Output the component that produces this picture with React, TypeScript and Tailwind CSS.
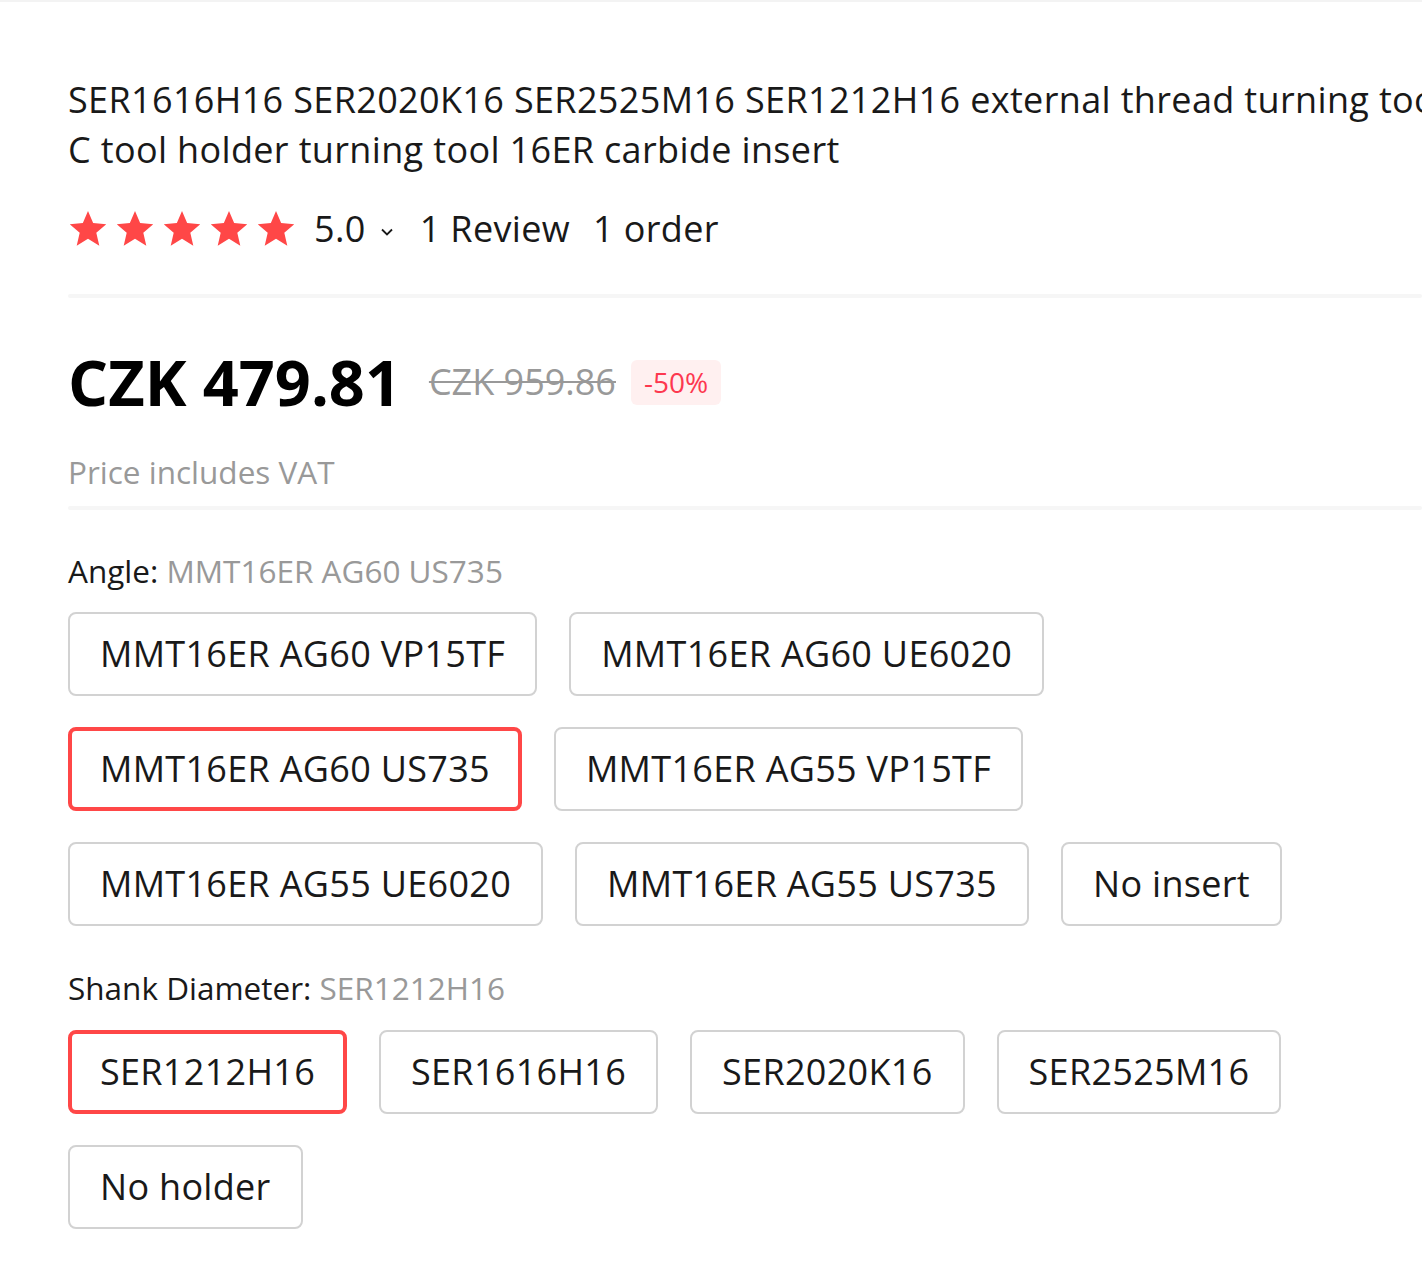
import React from 'react'

const angleOptions = [
  'MMT16ER AG60 VP15TF',
  'MMT16ER AG60 UE6020',
  'MMT16ER AG60 US735',
  'MMT16ER AG55 VP15TF',
  'MMT16ER AG55 UE6020',
  'MMT16ER AG55 US735',
  'No insert'
]

const shankOptions = ['SER1212H16', 'SER1616H16', 'SER2020K16', 'SER2525M16', 'No holder']

function Star() {
  return (
    <svg width="40" height="40" viewBox="0 0 24 24" className="shrink-0">
      <path
        d="M12 1.2l3.09 7.26 7.86.68-5.97 5.17 1.8 7.69L12 17.9 5.22 22l1.8-7.69L1.05 9.14l7.86-.68z"
        fill="#ff4747"
      />
    </svg>
  )
}

function OptionButton({ label, selected }: { label: string; selected: boolean }) {
  return (
    <button
      className={`h-[84px] flex items-center rounded-[8px] bg-white text-[36px] leading-[50px] tracking-[0.3px] text-[#191919] ${
        selected ? 'border-4 border-[#ff4747] px-[28px]' : 'border-2 border-[#d2d2d2] px-[30px]'
      }`}>
      {label}
    </button>
  )
}

export default function App() {
  const selectedAngle = 'MMT16ER AG60 US735'
  const selectedShank = 'SER1212H16'

  return (
    <div
      className="w-[1422px] h-[1272px] overflow-hidden bg-white border-t-2 border-[#f3f3f3]"
      style={{ fontFamily: '"Open Sans", "Noto Sans", sans-serif' }}>
      <div className="pl-[68px]">
        {/* Title */}
        <h1 className="mt-[73px] text-[36px] leading-[50px] tracking-[0.35px] font-normal text-[#191919]">
          <div className="whitespace-nowrap">
            SER1616H16 SER2020K16 SER2525M16 SER1212H16 external thread turning tool SE
          </div>
          <div className="whitespace-nowrap">C tool holder turning tool 16ER carbide insert</div>
        </h1>

        {/* Rating */}
        <div className="mt-[29px] flex items-center h-[50px] text-[36px] tracking-[0.35px] text-[#191919]">
          <div className="flex items-center gap-[7px]">
            {[0, 1, 2, 3, 4].map(i => (
              <Star key={i} />
            ))}
          </div>
          <span className="ml-[18px]">5.0</span>
          <svg width="18" height="12" viewBox="0 0 18 12" className="ml-[12px] mt-[6px]">
            <path d="M4 3.5l5 5 5-5" fill="none" stroke="#191919" strokeWidth="1.8" />
          </svg>
          <span className="ml-[24px]">1 Review</span>
          <span className="ml-[23px]">1 order</span>
        </div>

        <div className="mt-[40px] h-[4px] rounded-full bg-[#f6f6f6]" />

        {/* Price */}
        <div className="mt-[44px] flex items-center h-[80px]">
          <span className="text-[63px] font-bold text-black">CZK 479.81</span>
          <span className="ml-[28px] text-[36px] text-[#999999] line-through decoration-2">
            CZK 959.86
          </span>
          <span className="ml-[15px] h-[45px] px-[13px] flex items-center rounded-[6px] bg-[#fff0f0] text-[28px] text-[#fd384f]">
            -50%
          </span>
        </div>

        <p className="mt-[28px] text-[31.5px] leading-[44px] text-[#999999]">Price includes VAT</p>

        <div className="mt-[12px] h-[4px] rounded-full bg-[#f6f6f6]" />

        {/* Angle */}
        <div className="mt-[39px] text-[31.5px] leading-[44px] text-[#191919]">
          Angle: <span className="text-[#999999]">{selectedAngle}</span>
        </div>
        <div className="mt-[19px] flex flex-wrap gap-x-[32px] gap-y-[31px]">
          {angleOptions.map(o => (
            <OptionButton key={o} label={o} selected={o === selectedAngle} />
          ))}
        </div>

        {/* Shank Diameter */}
        <div className="mt-[40px] text-[31.5px] leading-[44px] text-[#191919]">
          Shank Diameter: <span className="text-[#999999]">{selectedShank}</span>
        </div>
        <div className="mt-[20px] flex flex-wrap gap-x-[32px] gap-y-[31px]">
          {shankOptions.map(o => (
            <OptionButton key={o} label={o} selected={o === selectedShank} />
          ))}
        </div>
      </div>
    </div>
  )
}
